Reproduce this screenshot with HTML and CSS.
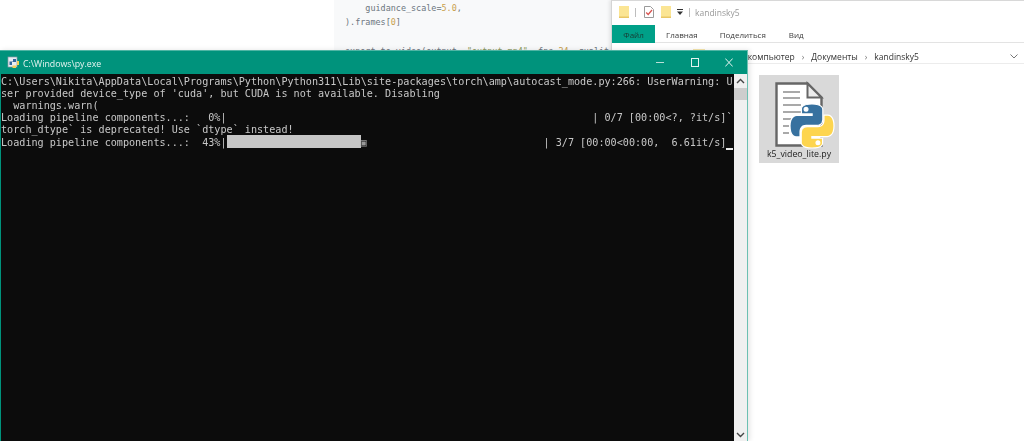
FILE: index.html
```html
<!DOCTYPE html>
<html lang="ru">
<head>
<meta charset="utf-8">
<title>py.exe</title>
<link rel="stylesheet" href="styles.css">
</head>
<body>
<div class="desktop">
  <section class="editor">
    <pre class="code">    guidance_scale=<span class="num">5.0</span>,
).frames[<span class="num">0</span>]

export_to_video(output, <span class="str">"output.mp4"</span>, fps=<span class="num">24</span>, qualit</pre>
  </section>

  <section class="explorer">
    <div class="qat">
      <svg class="qat-folder" width="10" height="12" viewBox="0 0 10 12"><rect width="10" height="12" fill="#fbe594"/><rect y="10.500" width="10" height="1.500" fill="#e9c766"/></svg>
      <span class="qat-sep"></span>
      <svg class="qat-doc" width="10" height="12" viewBox="0 0 10 12"><path d="M.5.5h6l3 3v8H.5z" fill="#fff" stroke="#9a9a9a"/><path d="M2.200 6.500l2 2 3.800-4.500" fill="none" stroke="#d9534f" stroke-width="1.300"/></svg>
      <svg class="qat-folder" width="10" height="12" viewBox="0 0 10 12"><rect width="10" height="12" fill="#fbe594"/><rect y="10.500" width="10" height="1.500" fill="#e9c766"/></svg>
      <svg class="qat-drop" width="6" height="6" viewBox="0 0 6 6"><path d="M0 0h6v1H0zM0 2.500h6L3 6z" fill="#333"/></svg>
      <span class="qat-sep"></span>
      <span class="win-name">kandinsky5</span>
    </div>
    <nav class="ribbon">
      <span class="tab tab-file">Файл</span>
      <span class="tab tab-home">Главная</span>
      <span class="tab tab-share">Поделиться</span>
      <span class="tab tab-view">Вид</span>
    </nav>
    <div class="address">
      <span class="addr-folder"></span>
      <span class="crumbs">Этот компьютер<i class="chev">›</i>Документы<i class="chev">›</i>kandinsky5</span>
      <svg class="addr-down" width="8" height="5" viewBox="0 0 8 5"><path d="M.5.500L4 4l3.500-3.500" fill="none" stroke="#777"/></svg>
    </div>
    <figure class="file">
      <svg class="file-icon" width="62" height="66" viewBox="0 0 62 66">
        <path d="M1.500 1.500h31l14 14v48h-45z" fill="#fff" stroke="#666" stroke-width="2.400"/>
        <path d="M32.500 1.500v14h14z" fill="#ececec" stroke="#666" stroke-width="2"/>
        <path d="M8 10h17M8 16h17M8 23h18M8 30h18M8 37h8M8 44h6M8 51h6" stroke="#a9a9a9" stroke-width="1.800"/>
        <g transform="translate(15 22) scale(.4)" stroke="#fff" stroke-width="3">
          <path d="M54.900 0C26.900 0 28.600 12.200 28.600 12.200v12.600h26.700v3.800H18S0 26.600 0 55c0 28.400 15.700 27.400 15.700 27.400h9.400V69.200s-.5-15.700 15.400-15.700h26.600s14.900.2 14.900-14.400V14.900S84.300 0 54.900 0zM40.100 8.500a4.800 4.800 0 1 1 0 9.600 4.800 4.800 0 0 1 0-9.600z" fill="#37719f" fill-rule="evenodd"/>
          <path d="M54.900 0C26.900 0 28.600 12.200 28.600 12.200v12.600h26.700v3.800H18S0 26.600 0 55c0 28.400 15.700 27.400 15.700 27.400h9.400V69.200s-.5-15.700 15.400-15.700h26.600s14.900.2 14.900-14.400V14.900S84.300 0 54.900 0zM40.100 8.500a4.800 4.800 0 1 1 0 9.600 4.800 4.800 0 0 1 0-9.600z" fill="#fdd54f" fill-rule="evenodd" transform="rotate(180 55 55)"/>
        </g>
      </svg>
      <figcaption class="file-name">k5_video_lite.py</figcaption>
    </figure>
  </section>

  <section class="console">
    <header class="titlebar">
      <svg class="py-icon" width="13" height="13" viewBox="0 0 13 13"><rect x="1" y="1" width="9" height="10" fill="#e8edf2" stroke="#8b99a6" stroke-width=".7"/><path d="M6 3h3v3H5v3H2.500V5.500H6z" fill="#34689c"/><path d="M10 5h2v4H9v3H5.500V9.500H10z" fill="#f4cf57"/></svg>
      <span class="title">C:\Windows\py.exe</span>
      <div class="controls">
        <svg width="8" height="9" viewBox="0 0 8 9"><path d="M0 4.500h8" stroke="#b9dfd8"/></svg>
        <svg width="8" height="9" viewBox="0 0 8 9"><rect x=".5" y=".5" width="7" height="8" fill="none" stroke="#e4f3f0"/></svg>
        <svg width="8" height="9" viewBox="0 0 8 9"><path d="M.3.500l7.400 8M7.700.500l-7.400 8" stroke="#e4f3f0"/></svg>
      </div>
    </header>
    <div class="console-body">
      <pre class="term">C:\Users\Nikita\AppData\Local\Programs\Python\Python311\Lib\site-packages\torch\amp\autocast_mode.py:266: UserWarning: U
ser provided device_type of 'cuda', but CUDA is not available. Disabling
  warnings.warn(
Loading pipeline components...:   0%|                                                            | 0/7 [00:00&lt;?, ?it/s]`
torch_dtype` is deprecated! Use `dtype` instead!
Loading pipeline components...:  43%|<span class="bar">                      </span><span class="bar-end">▣</span>                             | 3/7 [00:00&lt;00:00,  6.61it/s]<span class="cursor"> </span></pre>
      <aside class="scrollbar">
        <svg class="sb-up" width="9" height="6" viewBox="0 0 9 6"><path d="M1 5l3.500-3.500L8 5" fill="none" stroke="#444" stroke-width="1.400"/></svg>
        <span class="sb-thumb"></span>
        <svg class="sb-down" width="9" height="6" viewBox="0 0 9 6"><path d="M1 1l3.500 3.500L8 1" fill="none" stroke="#444" stroke-width="1.400"/></svg>
      </aside>
    </div>
  </section>
</div>
</body>
</html>
```

FILE: styles.css
```css
* { box-sizing: border-box; }
html, body { margin: 0; height: 100%; background: #fff; }
.desktop {
  position: relative;
  width: 1024px;
  height: 441px;
  overflow: hidden;
  filter: blur(0.35px);
  font-family: "Open Sans", "Noto Sans", sans-serif;
}

/* background editor */
.editor {
  position: absolute;
  left: 334px;
  top: 0;
  width: 277px;
  height: 60px;
  background: #f8f9fa;
  padding: 1px 0 0 11px;
  overflow: hidden;
}
.code {
  margin: 0;
  font: 8.450px/14.200px "DejaVu Sans Mono", monospace;
  color: #6c7680;
  white-space: pre;
}
.num { color: #c9a14f; }
.str { color: #8c9a5f; }

/* explorer */
.explorer {
  position: absolute;
  left: 611px;
  top: 0;
  width: 413px;
  height: 441px;
  background: #fff;
  border-left: 1px solid #d4d4d4;
  border-top: 1px solid #d8d8d8;
  box-shadow: -2px 0 3px rgba(0, 0, 0, .08);
}
.qat {
  display: flex;
  align-items: center;
  height: 24px;
  padding: 0 0 2px 7px;
  background: #fff;
}
.qat-sep { width: 1px; height: 9px; margin: 0 5px 0 6px; background: #bdbdbd; }
.qat-doc { margin-left: 3px; }
.qat-folder + .qat-drop { margin-left: 6px; }
.qat-doc + .qat-folder { margin-left: 7px; }
.qat-drop + .qat-sep { margin-left: 6px; }
.win-name { font-size: 8.500px; color: #9a9a9a; }
.ribbon {
  display: flex;
  height: 18px;
  border-bottom: 1px solid #e3e3e3;
  font-size: 8px;
  color: #3c3c3c;
}
.tab { padding-top: 4px; }
.tab-file {
  width: 43px;
  height: 18px;
  text-align: center;
  background: #00a088;
  color: #183a33;
}
.tab-home { margin-left: 11px; }
.tab-share { margin-left: 22px; }
.tab-view { margin-left: 23px; }
.address {
  display: flex;
  align-items: center;
  height: 15px;
  margin: 6px 0 0 81px;
  padding-right: 6px;
  border-bottom: 1px solid #ececec;
  font-size: 8.500px;
  color: #333;
}
.addr-folder { width: 12px; height: 15px; background: #f6e6ad; flex: none; }
.crumbs { white-space: nowrap; margin-left: 22px; }
.chev { margin: 0 7px; font-style: normal; color: #777; }
.addr-down { margin-left: auto; }
.file {
  position: absolute;
  left: 147px;
  top: 74px;
  width: 80px;
  height: 88px;
  margin: 0;
  background: #d9d9d9;
  display: flex;
  flex-direction: column;
  align-items: center;
  padding-top: 7px;
}
.file-icon { overflow: visible; margin-left: 13px; flex: none; }
.file-name { font-size: 8.800px; line-height: 11px; margin-top: 1px; color: #222; white-space: nowrap; }

/* console */
.console {
  position: absolute;
  left: 0;
  top: 50px;
  width: 748px;
  height: 391px;
  background: #00937c;
  border-top: 1px solid #4fb5a4;
  border-right: 1px solid #6cc0b2;
  box-shadow: 2px 0 5px rgba(0, 0, 0, .1);
  display: flex;
  flex-direction: column;
}
.titlebar {
  display: flex;
  align-items: center;
  height: 23px;
  padding-left: 7px;
  flex: none;
}
.py-icon { flex: none; }
.title {
  margin: 2px 0 0 3px;
  font-size: 8.800px;
  color: #e6f4f1;
}
.controls {
  display: flex;
  gap: 26.500px;
  margin-left: auto;
  padding-right: 14px;
}
.console-body {
  flex: 1;
  display: flex;
  min-height: 0;
  margin-left: 1px;
  background: #0c0c0c;
}
.term {
  flex: 1;
  margin: 0;
  padding-top: 1.500px;
  font: 10.130px/12.200px "DejaVu Sans Mono", monospace;
  color: #c8c8c8;
  white-space: pre;
  overflow: hidden;
}
.bar {
  display: inline-block;
  height: 12.500px;
  margin: -1.500px 0 -.5px;
  vertical-align: top;
  background: #c6c6c6;
}
.bar-end { color: #999; }
.cursor { border-bottom: 2px solid #e8e8e8; }
.scrollbar {
  width: 13px;
  flex: none;
  background: #f0f0f0;
  display: flex;
  flex-direction: column;
  align-items: center;
  padding: 4px 0 3px;
}
.sb-thumb {
  width: 100%;
  height: 12px;
  margin-top: 4px;
  background: #cdcdcd;
}
.sb-down { margin-top: auto; }
```
